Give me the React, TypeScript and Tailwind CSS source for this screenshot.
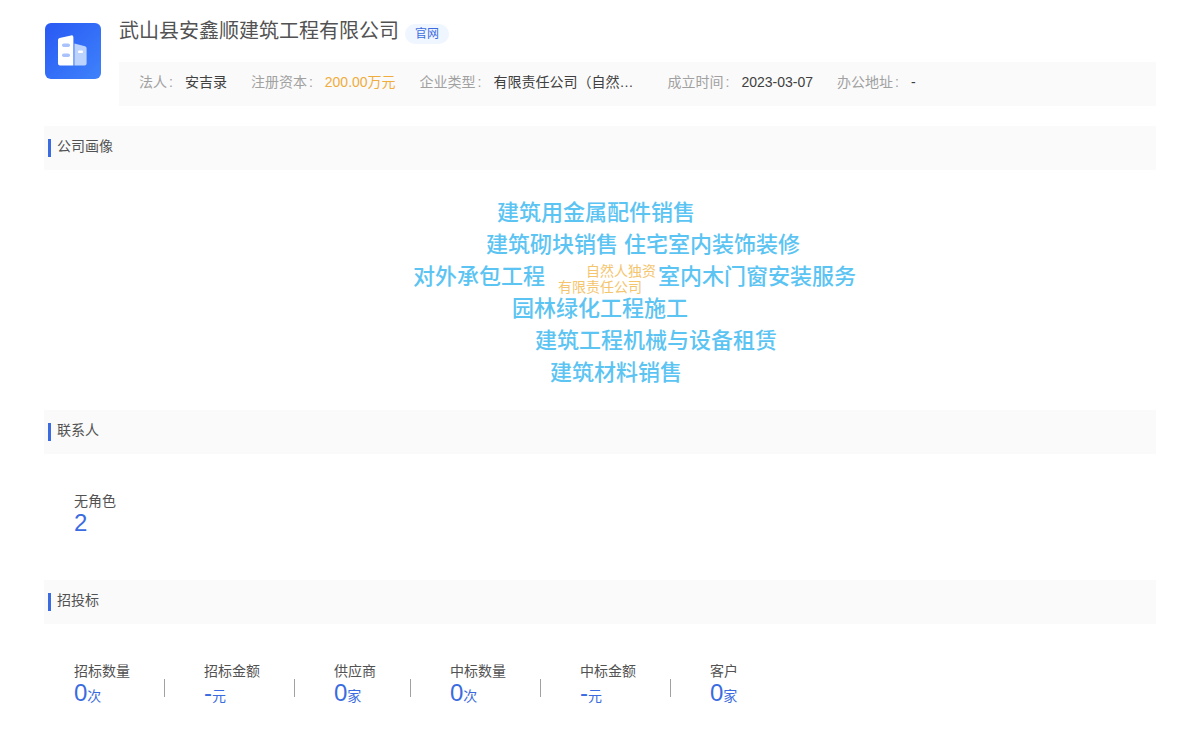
import React from 'react';

const FONT = { fontFamily: '"Liberation Sans", "Noto Sans CJK SC", sans-serif' };

const infoItems = [
  { label: '法人', value: '安吉录' },
  { label: '注册资本', value: '200.00万元', accent: true },
  { label: '企业类型', value: '有限责任公司（自然人独资）', clip: true },
  { label: '成立时间', value: '2023-03-07' },
  { label: '办公地址', value: '-' },
];

const cloudWords = [
  { text: '建筑用金属配件销售', left: 'left-[453px]', top: 'top-[27px]' },
  { text: '建筑砌块销售', left: 'left-[442px]', top: 'top-[59px]' },
  { text: '住宅室内装饰装修', left: 'left-[580px]', top: 'top-[59px]' },
  { text: '对外承包工程', left: 'left-[369px]', top: 'top-[91px]' },
  { text: '室内木门窗安装服务', left: 'left-[614px]', top: 'top-[91px]' },
  { text: '园林绿化工程施工', left: 'left-[468px]', top: 'top-[123px]' },
  { text: '建筑工程机械与设备租赁', left: 'left-[491px]', top: 'top-[155px]' },
  { text: '建筑材料销售', left: 'left-[506px]', top: 'top-[187px]' },
];

const bidStats = [
  { label: '招标数量', value: '0', unit: '次' },
  { label: '招标金额', value: '-', unit: '元' },
  { label: '供应商', value: '0', unit: '家' },
  { label: '中标数量', value: '0', unit: '次' },
  { label: '中标金额', value: '-', unit: '元' },
  { label: '客户', value: '0', unit: '家' },
];

const Logo = () => (
  <div className="ml-px mt-1.75 flex h-14 w-14 shrink-0 items-center justify-center rounded-md bg-gradient-to-br from-[#2a58f3] to-[#3f82fb]">
    <svg viewBox="0 0 56 56" className="h-14 w-14">
      <path d="M13 17a2 2 0 0 1 1.6-2L26 12.4a2 2 0 0 1 2.4 2V42.4H15a2 2 0 0 1-2-2Z" fill="#fff" />
      <path d="M29.4 20.6l10.6 2.6a2 2 0 0 1 1.6 2V40.4a2 2 0 0 1-2 2H29.4Z" fill="#bcd3fd" />
      <rect x="17" y="20.5" width="8" height="3.5" rx="1.75" fill="#a9c2fb" />
      <rect x="17" y="30.5" width="8" height="3.5" rx="1.75" fill="#a9c2fb" />
      <rect x="33" y="27.5" width="5" height="2.5" rx="1" fill="#fff" />
    </svg>
  </div>
);

const SectionHeader = ({ title }: { title: string }) => (
  <div className="flex h-11 items-center gap-1.5 bg-neutral-50 pl-1">
    <span className="h-4.5 w-0.75 bg-[#3b6be0]" />
    <span className="pb-1 text-sm text-neutral-600">{title}</span>
  </div>
);

const Stat = ({ label, value, unit }: { label: string; value: string; unit?: string }) => (
  <div className="flex flex-col">
    <span className="text-sm leading-5.5 text-neutral-600">{label}</span>
    <span className="text-2xl leading-5.5 text-[#3b6be0]">
      {value}
      {unit && <span className="text-sm">{unit}</span>}
    </span>
  </div>
);

export default function App() {
  return (
    <div className="min-h-screen bg-white px-11 pt-4" style={FONT}>
      <div className="flex gap-4.5">
        <Logo />
        <div className="min-w-0 flex-1">
          <div className="flex h-7.5 items-center gap-1.5">
            <h1 className="text-xl text-neutral-600">武山县安鑫顺建筑工程有限公司</h1>
            <span className="mt-1.5 rounded-full bg-blue-50 px-2.5 py-0.5 text-xs text-[#3b6be0]">官网</span>
          </div>
          <div className="mt-4 flex h-11 items-center gap-6 bg-neutral-50 pb-1 pl-5 text-sm">
            {infoItems.map((item) => (
              <div key={item.label} className="flex gap-3">
                <span className="text-neutral-400">
                  {item.label}
                  <span className="ml-0.5">:</span>
                </span>
                <span
                  className={`${item.accent ? 'text-[#f0ac3c]' : 'text-neutral-700'} ${
                    item.clip ? 'w-37.5 truncate' : ''
                  }`}
                >
                  {item.value}
                </span>
              </div>
            ))}
          </div>
        </div>
      </div>

      <div className="mt-5">
        <SectionHeader title="公司画像" />
        <div className="relative h-60">
          {cloudWords.map((word) => (
            <span
              key={word.text}
              className={`absolute ${word.left} ${word.top} text-[22px] leading-8 font-medium whitespace-nowrap text-[#5cc4f2]`}
            >
              {word.text}
            </span>
          ))}
          <span className="absolute top-[93px] left-[542px] text-sm leading-4 whitespace-nowrap text-[#f5c56e]">
            自然人独资
          </span>
          <span className="absolute top-[109px] left-[514px] text-sm leading-4 whitespace-nowrap text-[#f5c56e]">
            有限责任公司
          </span>
        </div>
      </div>

      <SectionHeader title="联系人" />
      <div className="h-[126px] pt-9 pl-7.5">
        <Stat label="无角色" value="2" />
      </div>

      <SectionHeader title="招投标" />
      <div className="flex items-center pt-9 pl-7.5">
        {bidStats.map((stat, i) => (
          <React.Fragment key={stat.label}>
            <Stat {...stat} />
            {i < bidStats.length - 1 && (
              <span className="mt-2.5 ml-8.5 mr-9.5 h-4.5 w-0.5 border-l border-neutral-400" />
            )}
          </React.Fragment>
        ))}
      </div>
    </div>
  );
}
